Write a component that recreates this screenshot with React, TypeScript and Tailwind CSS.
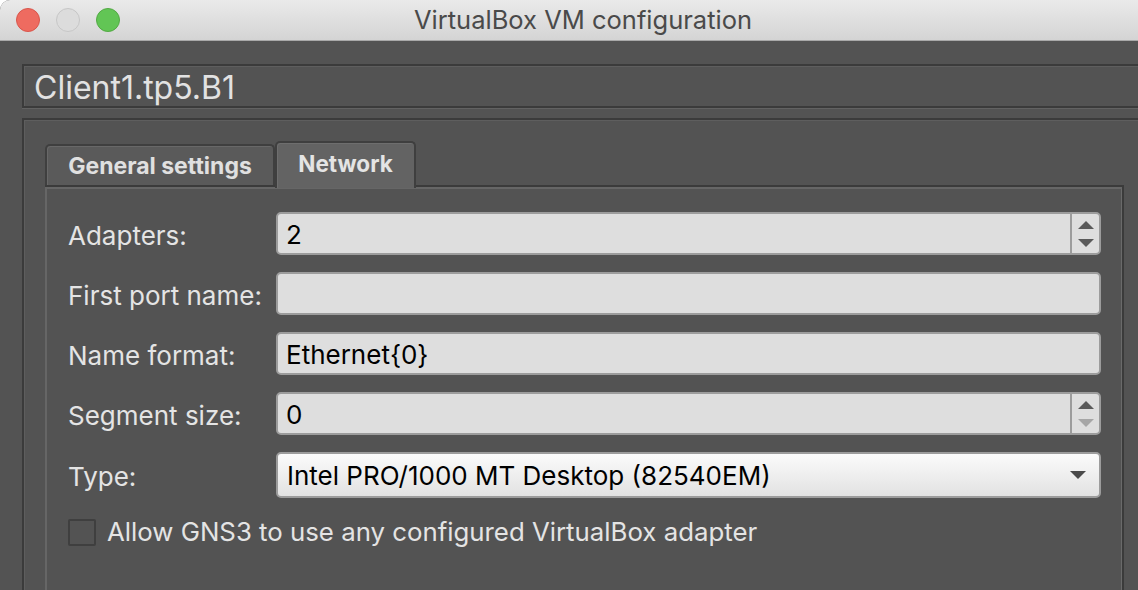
import React from "react";

const font = "font-['Inter','Noto_Sans',sans-serif]";

function SpinArrows({ downDisabled }: { downDisabled?: boolean }) {
  return (
    <div className="flex h-full w-[29px] flex-col items-center justify-center gap-[10px] border-l-2 border-[#9c9c9c]">
      <svg width="16" height="8" viewBox="0 0 16 8">
        <path d="M8 0 L16 8 L0 8 Z" fill="#5a5a5a" />
      </svg>
      <svg width="16" height="8" viewBox="0 0 16 8">
        <path d="M0 0 L16 0 L8 8 Z" fill={downDisabled ? "#a6a6a6" : "#5a5a5a"} />
      </svg>
    </div>
  );
}

function Field({
  label,
  value,
  spin,
  downDisabled,
}: {
  label: string;
  value?: string;
  spin?: boolean;
  downDisabled?: boolean;
}) {
  return (
    <div className="flex h-[43px] items-center">
      <span className="w-[208px] pt-[4px] text-[26px] text-[#e4e4e4]">{label}</span>
      <div className="flex h-full flex-1 items-center rounded-[5px] border-2 border-[#9c9c9c] bg-[#dedede]">
        <span className="flex-1 pl-[8px] pt-[2px] text-[26px] text-black">{value}</span>
        {spin && <SpinArrows downDisabled={downDisabled} />}
      </div>
    </div>
  );
}

export default function App() {
  return (
    <div className={`h-[590px] w-[1138px] overflow-hidden bg-white ${font}`}>
      <div className="h-full w-full overflow-hidden rounded-tl-[10px] bg-[#535353]">
        {/* title bar */}
        <div className="grid h-[41px] grid-cols-[1fr_auto_1fr] items-center border-b border-[#a9a9a9] bg-gradient-to-b from-[#eaeaea] to-[#d4d4d4]">
          <div className="flex items-center gap-[16px] pl-[16px]">
            <span className="h-[24px] w-[24px] rounded-full border border-[#d8564c] bg-[#ee6b60]" />
            <span className="h-[24px] w-[24px] rounded-full border border-[#c6c6c6] bg-[#dcdcdc]" />
            <span className="h-[24px] w-[24px] rounded-full border border-[#53a944] bg-[#62c555]" />
          </div>
          <span className="pl-[28px] text-[25.5px] text-[#4a4a4a]">VirtualBox VM configuration</span>
          <div />
        </div>

        <div className="w-[1170px] pl-[22px] pt-[23px]">
          {/* name */}
          <div className="flex h-[44px] items-center border-2 border-r-0 border-[#3b3b3b] shadow-[inset_1px_1px_0_#5e5e5e,0_1px_0_#626262] pl-[10px]">
            <span className="pt-[3px] text-[32px] leading-none text-[#e2e2e2]">Client1.tp5.B1</span>
          </div>

          {/* outer frame */}
          <div className="mt-[10px] h-[480px] border-2 border-r-0 border-b-0 border-[#3b3b3b] pl-[21px] pt-[21px] shadow-[inset_1px_1px_0_#5e5e5e]">
            {/* tabs */}
            <div className="relative z-10 flex items-end">
              <div className="flex h-[41px] w-[230px] items-center justify-center rounded-t-[5px] border-2 border-b-0 border-[#3f3f3f] bg-[#5a5a5a] shadow-[inset_1px_1px_0_#686868]">
                <span className="pt-[2px] text-[23px] font-bold text-[#e0e0e0]">General settings</span>
              </div>
              <div className="-mb-[3px] flex h-[47px] w-[141px] items-center justify-center rounded-t-[5px] border-2 border-b-0 border-[#3f3f3f] bg-[#636363] shadow-[inset_1px_1px_0_#6e6e6e] pb-[3px]">
                <span className="text-[22.5px] font-bold text-[#e4e4e4]">Network</span>
              </div>
            </div>

            {/* pane */}
            <div className="h-[420px] w-[1079px] border-t-2 border-r-2 border-[#3b3b3b] shadow-[inset_2px_2px_0_#666666,inset_-1px_0_0_#6a6a6a] pl-[23px] pr-[21px] pt-[25px]">
              <div className="flex flex-col gap-[17px]">
                <Field label="Adapters:" value="2" spin />
                <Field label="First port name:" />
                <Field label="Name format:" value="Ethernet{0}" />
                <Field label="Segment size:" value="0" spin downDisabled />
                <div className="flex h-[46px] items-center">
                  <span className="w-[208px] pt-[2px] text-[26px] text-[#e4e4e4]">Type:</span>
                  <div className="flex h-full flex-1 items-center rounded-[5px] border-2 border-[#9c9c9c] bg-gradient-to-b from-[#fbfbfb] to-[#e2e2e2] pl-[9px] pr-[13px]">
                    <span className="flex-1 pt-[1px] text-[26px] text-black">Intel PRO/1000 MT Desktop (82540EM)</span>
                    <svg width="16" height="8" viewBox="0 0 16 8">
                      <path d="M0 0 L16 0 L8 8 Z" fill="#4a4a4a" />
                    </svg>
                  </div>
                </div>
              </div>

              <label className="mt-[15px] flex items-center gap-[11px]">
                <span className="h-[27px] w-[28px] rounded-[2px] border-2 border-[#3f3f3f] bg-[#535353]" />
                <span className="text-[25.8px] text-[#e4e4e4]">
                  Allow GNS3 to use any configured VirtualBox adapter
                </span>
              </label>
            </div>
          </div>
        </div>
      </div>
    </div>
  );
}
